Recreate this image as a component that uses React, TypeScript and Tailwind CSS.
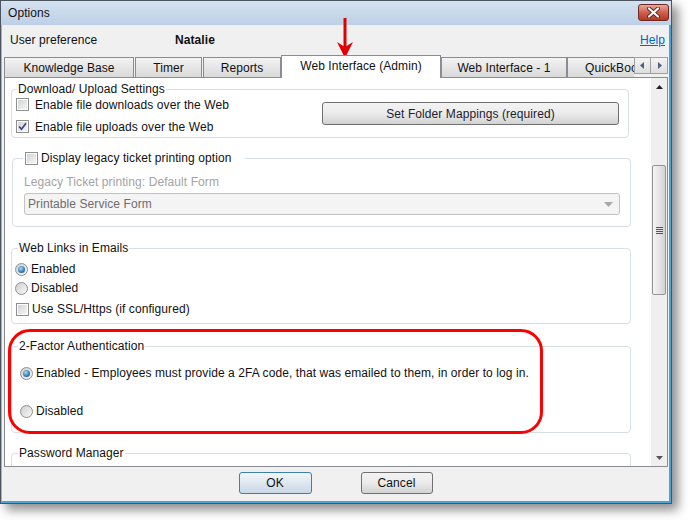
import React from 'react';

const Checkbox: React.FC<{ checked?: boolean }> = ({ checked }) => (
  <span className="w-[13px] h-[13px] shrink-0 border border-[#8e8f8f] bg-white p-px flex">
    <span className="flex-1 bg-linear-to-br from-[#d4d4d4] to-[#f6f6f6] flex items-center justify-center">
      {checked && (
        <svg width="9" height="9" viewBox="0 0 9 9">
          <path d="M1 4.5 L3.5 7.2 L8 1.2" fill="none" stroke="#34458e" strokeWidth="1.7" />
        </svg>
      )}
    </span>
  </span>
);

const Radio: React.FC<{ checked?: boolean }> = ({ checked }) => (
  <span className="w-[13px] h-[13px] shrink-0 rounded-full border border-[#8e8f8f] bg-linear-to-br from-[#cfcfcf] to-[#f8f8f8] flex items-center justify-center">
    {checked && (
      <span className="w-[7px] h-[7px] rounded-full bg-[radial-gradient(circle_at_40%_35%,#a9dcfa,#2f79b5_60%,#164a7a)]" />
    )}
  </span>
);

const Legend: React.FC<{ children: React.ReactNode; className?: string }> = ({ children, className }) => (
  <legend className={`px-px text-[12px] leading-[14px] ${className || ''}`}>{children}</legend>
);

const Tab: React.FC<{ label: string; width: string }> = ({ label, width }) => (
  <div
    className={`${width} h-[20px] border border-b-0 border-[#898c95] bg-linear-to-b from-[#f3f3f3] to-[#d9d9d9] flex items-center justify-center whitespace-nowrap`}
  >
    {label}
  </div>
);

export default function App() {
  return (
    <div className="w-[690px] h-[520px] bg-white relative overflow-hidden font-['Liberation_Sans',Arial,sans-serif] text-[12px] tracking-[0.08px] text-[#111]">
      {/* Window */}
      <div className="w-[672px] h-[504px] flex flex-col border border-[#4a5560] shadow-[6px_6px_10px_rgba(0,0,0,0.45)]">
        {/* Title bar */}
        <div className="h-[24px] shrink-0 flex items-center justify-between pl-[7px] pr-[2px] bg-linear-to-b from-[#d4e2f1] to-[#bdd0e6]">
          <span className="text-[12px]">Options</span>
          <div className="w-[31px] h-[17px] mb-[2px] rounded-[3px] border border-[#6b2a25] bg-linear-to-b from-[#e9a99a] via-[#d0604c] to-[#b43822] flex items-center justify-center">
            <svg width="13" height="11" viewBox="0 0 13 11">
              <path d="M2 1.5 L11 9.5 M11 1.5 L2 9.5" stroke="#5a2420" strokeWidth="4" strokeLinecap="round" />
              <path d="M2 1.5 L11 9.5 M11 1.5 L2 9.5" stroke="#ffffff" strokeWidth="2.2" strokeLinecap="round" />
            </svg>
          </div>
        </div>

        {/* Body */}
        <div className="flex-1 flex flex-col bg-[#f0f0f0] border-l border-l-[#a7b3c0] border-r-2 border-r-[#49a3d6] border-b-2 border-b-[#49a3d6]">
          {/* User preference row */}
          <div className="h-[30px] shrink-0 flex items-center pl-[8px] pr-[4px]">
            <span className="w-[165px]">User preference</span>
            <span className="font-bold">Natalie</span>
            <span className="ml-auto text-[#0066cc] underline">Help</span>
          </div>

          {/* Tabs */}
          <div className="h-[22px] shrink-0 flex items-end pl-[2px] relative z-10">
            <Tab label="Knowledge Base" width="w-[130px]" />
            <div className="w-px" />
            <Tab label="Timer" width="w-[67px]" />
            <div className="w-px" />
            <Tab label="Reports" width="w-[78px]" />
            <div className="w-[160px] h-[23px] -mb-px border border-b-0 border-[#898c95] bg-white flex items-center justify-center pb-[2px] whitespace-nowrap">
              Web Interface (Admin)
            </div>
            <Tab label="Web Interface - 1" width="w-[126px]" />
            <div className="w-[67px] h-[20px] border-t border-l border-[#898c95] bg-linear-to-b from-[#f3f3f3] to-[#d9d9d9] flex items-center pl-[17px] overflow-hidden whitespace-nowrap">
              QuickBooks
            </div>
            <div className="self-start mt-[2px] flex">
              <div className="w-[17px] h-[17px] border border-[#a0a0a0] bg-linear-to-b from-[#f4f4f4] to-[#dedede] flex items-center justify-center">
                <svg width="5" height="7" viewBox="0 0 5 7"><path d="M4 0 L0 3.5 L4 7 Z" fill="#4d6185" /></svg>
              </div>
              <div className="w-[17px] h-[17px] border border-l-0 border-[#a0a0a0] bg-linear-to-b from-[#f4f4f4] to-[#dedede] flex items-center justify-center">
                <svg width="5" height="7" viewBox="0 0 5 7"><path d="M1 0 L5 3.5 L1 7 Z" fill="#4d6185" /></svg>
              </div>
            </div>
          </div>

          {/* Tab panel */}
          <div className="ml-[2px] w-[664px] h-[390px] shrink-0 border border-[#898c95] bg-white flex">
            <div className="flex-1 overflow-hidden pl-[6px] pt-[4px]">
              {/* Download / Upload */}
              <fieldset className="w-[618px] border border-[#d5dfe5] rounded-[4px]">
                <Legend className="ml-[5px]">Download/ Upload Settings</Legend>
                <div className="flex justify-between pl-[4px] pr-[9px] pb-[2px]">
                  <div className="flex flex-col">
                    <div className="h-[17px] flex items-center gap-[6px]">
                      <Checkbox />
                      <span>Enable file downloads over the Web</span>
                    </div>
                    <div className="h-[17px] mt-[5px] flex items-center gap-[6px]">
                      <Checkbox checked />
                      <span>Enable file uploads over the Web</span>
                    </div>
                  </div>
                  <button className="mt-[6px] w-[297px] h-[23px] rounded-[3px] border border-[#707070] bg-linear-to-b from-[#f3f3f3] via-[#ebebeb] to-[#d2d2d2] text-[#1c1c30]">
                    Set Folder Mappings (required)
                  </button>
                </div>
              </fieldset>

              {/* Legacy ticket printing */}
              <fieldset className="mt-[13px] ml-px w-[619px] border border-[#d5dfe5] rounded-[4px]">
                <legend className="ml-[10px] pl-[2px] pr-[14px] text-[12px] leading-[14px]">
                  <span className="flex items-center gap-[3px]">
                    <Checkbox />
                    <span>Display legacy ticket printing option</span>
                  </span>
                </legend>
                <div className="pl-[11px] pb-[11px]">
                  <div className="mt-[10px] h-[14px] leading-[14px] text-[#a3a3a3]">
                    Legacy Ticket printing: Default Form
                  </div>
                  <div className="mt-[4px] w-[596px] h-[22px] rounded-[3px] border border-[#c2c2c2] bg-[#f4f4f4] flex items-center justify-between pl-[3px] pr-[6px] text-[#6d6d6d]">
                    <span>Printable Service Form</span>
                    <svg width="9" height="5" viewBox="0 0 9 5"><path d="M0 0 L9 0 L4.5 5 Z" fill="#a8a8a8" /></svg>
                  </div>
                </div>
              </fieldset>

              {/* Web links */}
              <fieldset className="mt-[14px] w-[620px] border border-[#d5dfe5] rounded-[4px]">
                <Legend className="ml-[6px]">Web Links in Emails</Legend>
                <div className="pl-[3px] pb-[6px]">
                  <div className="mt-[6px] h-[16px] flex items-center gap-[3px]">
                    <Radio checked />
                    <span>Enabled</span>
                  </div>
                  <div className="mt-[3px] h-[16px] flex items-center gap-[3px]">
                    <Radio />
                    <span>Disabled</span>
                  </div>
                  <div className="mt-[5px] h-[16px] flex items-center gap-[3px] pl-px">
                    <Checkbox />
                    <span>Use SSL/Https (if configured)</span>
                  </div>
                </div>
              </fieldset>

              {/* 2FA */}
              <fieldset className="mt-[15px] w-[620px] border border-[#d5dfe5] rounded-[4px]">
                <Legend className="ml-[6px]">2-Factor Authentication</Legend>
                <div className="pl-[8px] pb-[13px]">
                  <div className="mt-[12px] h-[16px] flex items-center gap-[3px]">
                    <Radio checked />
                    <span>Enabled - Employees must provide a 2FA code, that was emailed to them, in order to log in.</span>
                  </div>
                  <div className="mt-[22px] h-[16px] flex items-center gap-[3px]">
                    <Radio />
                    <span>Disabled</span>
                  </div>
                </div>
              </fieldset>

              {/* Password manager */}
              <fieldset className="mt-[13px] w-[620px] h-[40px] border border-[#d5dfe5] rounded-[4px]">
                <Legend className="ml-[6px]">Password Manager</Legend>
              </fieldset>
            </div>

            {/* Scrollbar */}
            <div className="w-[16px] shrink-0 bg-[#efefef] flex flex-col items-center">
              <div className="h-[17px] w-full flex items-center justify-center pt-[1px]">
                <svg width="7" height="4" viewBox="0 0 7 4"><path d="M0 4 L3.5 0 L7 4 Z" fill="#222" /></svg>
              </div>
              <div className="mt-[70px] w-[14px] h-[130px] rounded-[2px] border border-[#959595] bg-linear-to-r from-[#f4f4f4] via-[#e6e6e6] to-[#d3d3d3] flex flex-col items-center justify-center gap-[1px]">
                <span className="w-[7px] h-px bg-[#555]" />
                <span className="w-[7px] h-px bg-[#555]" />
                <span className="w-[7px] h-px bg-[#555]" />
                <span className="w-[7px] h-px bg-[#555]" />
              </div>
              <div className="mt-auto h-[17px] w-full flex items-center justify-center">
                <svg width="7" height="4" viewBox="0 0 7 4"><path d="M0 0 L7 0 L3.5 4 Z" fill="#555" /></svg>
              </div>
            </div>
          </div>

          {/* Footer buttons */}
          <div className="flex-1 flex justify-center gap-[49px] pt-[5px]">
            <button className="w-[73px] h-[22px] rounded-[3px] border border-[#3c7fb1] bg-linear-to-b from-[#f2f6fa] to-[#cad8e6]">
              OK
            </button>
            <button className="w-[72px] h-[22px] rounded-[3px] border border-[#707070] bg-linear-to-b from-[#f3f3f3] via-[#ebebeb] to-[#d2d2d2]">
              Cancel
            </button>
          </div>
        </div>
      </div>

      {/* Annotation: red arrow */}
      <svg className="absolute left-[335px] top-[16px]" width="20" height="44" viewBox="0 0 20 44">
        <path d="M10 2 L10 34" stroke="#e00000" strokeWidth="3" />
        <path d="M2 26 L10 42 L18 26 L10 31 Z" fill="#e00000" />
      </svg>

      {/* Annotation: red highlight box */}
      <div className="absolute left-[8px] top-[329px] w-[535px] h-[105px] border-[3px] border-[#ff0000] rounded-[22px]" />
    </div>
  );
}
